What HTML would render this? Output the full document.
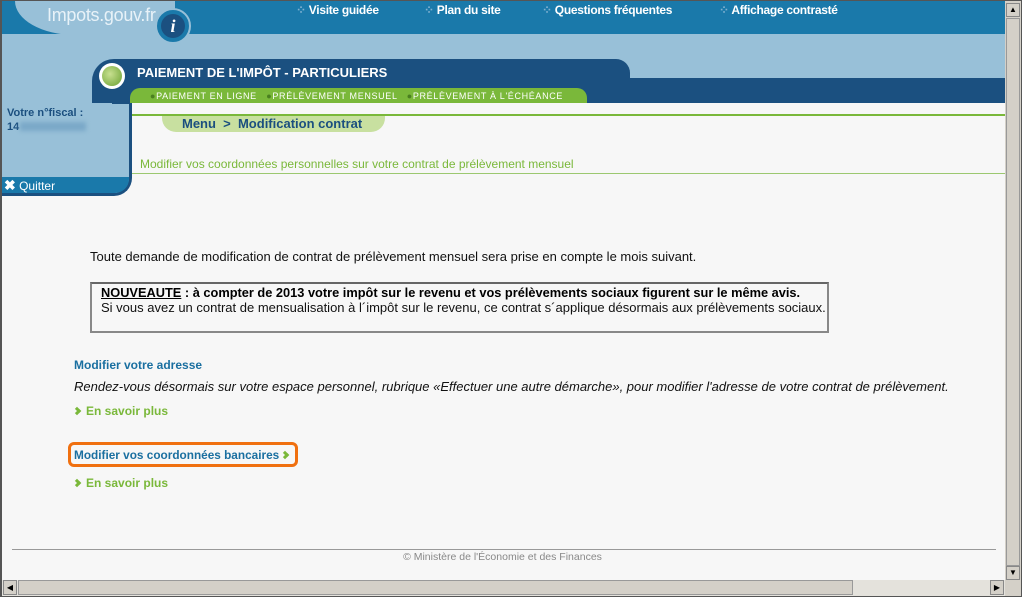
<!DOCTYPE html>
<html><head><meta charset="utf-8"><style>
*{margin:0;padding:0;box-sizing:border-box}
body{width:1022px;height:597px;overflow:hidden;background:#f7f7f7;font-family:"Liberation Sans",sans-serif;position:relative}
.a{position:absolute}
.c{letter-spacing:-0.3px}
.chev{display:inline-block;width:6px;height:6px;border-right:3px solid #7ab83a;border-top:3px solid #7ab83a;transform:rotate(45deg);margin-right:6px;position:relative;top:-1px}
</style></head><body>
<!-- frame -->
<div class="a" style="left:0;top:0;width:1022px;height:597px;border:1px solid #555;border-left:2px solid #555"></div>
<!-- top band -->
<div class="a" style="left:2px;top:1px;width:1003px;height:33px;background:#1a79aa"></div>
<div class="a" style="left:2px;top:34px;width:1003px;height:44px;background:#98c0d8"></div>
<div class="a" style="left:15px;top:1px;width:160px;height:34px;background:#98c0d8;border-radius:0 0 0 60px/0 0 0 34px"></div>
<div class="a" style="left:155px;top:8px;width:36px;height:36px;border-radius:50%;background:#1a79aa;border:2px solid #98c0d8"></div>
<div class="a" style="left:161px;top:14px;width:24px;height:24px;border-radius:50%;background:#1b5080;color:#fff;font:italic bold 18px 'Liberation Serif',serif;text-align:center;line-height:24px">i</div>
<div class="a" style="left:47px;top:5px;color:#e8f2f8;font-size:18px;letter-spacing:-0.3px">Impots.gouv.fr</div>
<div class="a c" style="left:296px;top:3px;color:#fff;font-size:12px;font-weight:bold"><span style="color:#7fb0d0">⁘</span> Visite guidée</div>
<div class="a c" style="left:424px;top:3px;color:#fff;font-size:12px;font-weight:bold"><span style="color:#7fb0d0">⁘</span> Plan du site</div>
<div class="a c" style="left:542px;top:3px;color:#fff;font-size:12px;font-weight:bold"><span style="color:#7fb0d0">⁘</span> Questions fréquentes</div>
<div class="a c" style="left:719px;top:3px;color:#fff;font-size:12px;font-weight:bold"><span style="color:#7fb0d0">⁘</span> Affichage contrasté</div>
<!-- left panel -->
<div class="a" style="left:2px;top:78px;width:130px;height:118px;background:#98c0d8;border-right:3px solid #1b5080;border-bottom:3px solid #1b5080;border-radius:0 0 18px 0"></div>
<div class="a" style="left:2px;top:177px;width:127px;height:16px;background:#1a79aa;border-radius:0 0 14px 0"></div>
<div class="a" style="left:4px;top:177px;color:#fff;font-size:12px"><b style="font-size:14px">✖</b> Quitter</div>
<div class="a" style="left:7px;top:107px;color:#1b4f7f;font-size:11px;font-weight:bold">Votre n°fiscal :</div>
<div class="a" style="left:7px;top:121px;color:#1b4f7f;font-size:11px;font-weight:bold">14</div>
<div class="a" style="left:20px;top:122px;width:66px;height:9px;background:#7aa8c8;filter:blur(2px)"></div>
<!-- header -->
<div class="a" style="left:615px;top:78px;width:390px;height:25px;background:#1b5080"></div>
<div class="a" style="left:92px;top:59px;width:538px;height:44px;background:#1b5080;border-radius:22px 14px 0 0"></div>
<div class="a" style="left:112px;top:90px;width:20px;height:14px;background:#1b5080"></div>
<div class="a" style="left:99px;top:63px;width:26px;height:26px;border-radius:50%;background:#fff"></div>
<div class="a" style="left:102px;top:66px;width:20px;height:20px;border-radius:50%;background:radial-gradient(circle at 40% 40%,#c8e090,#6aa030)"></div>
<div class="a" style="left:137px;top:65px;color:#fff;font-size:13px;font-weight:bold">PAIEMENT DE L'IMPÔT - PARTICULIERS</div>
<div class="a" style="left:130px;top:88px;width:457px;height:15px;background:#7ab83a;border-radius:10px 10px 0 0"></div>
<div class="a" style="left:150px;top:91px;color:#fff;font-size:9px;letter-spacing:0.65px;white-space:nowrap"><span style="color:#4a8020">●</span>PAIEMENT EN LIGNE &nbsp; <span style="color:#4a8020">●</span>PRÉLÈVEMENT MENSUEL &nbsp; <span style="color:#4a8020">●</span>PRÉLÈVEMENT À L'ÉCHÉANCE</div>
<!-- content -->
<div class="a" style="left:132px;top:114px;width:873px;height:2px;background:#7ab83a"></div>
<div class="a" style="left:162px;top:116px;width:223px;height:16px;background:#c8e0a0;border-radius:0 0 14px 14px"></div>
<div class="a" style="left:182px;top:116px;color:#1b4f7f;font-size:13px;font-weight:bold">Menu &nbsp;&gt;&nbsp; Modification contrat</div>
<div class="a" style="left:140px;top:157px;color:#7ab83a;font-size:12px">Modifier vos coordonnées personnelles sur votre contrat de prélèvement mensuel</div>
<div class="a" style="left:132px;top:173px;width:873px;height:1px;background:#9cc870"></div>
<div class="a" style="left:90px;top:249px;color:#111;font-size:13px;white-space:nowrap">Toute demande de modification de contrat de prélèvement mensuel sera prise en compte le mois suivant.</div>
<div class="a" style="left:90px;top:282px;width:739px;height:51px;border:2px solid #888;border-top-color:#666"></div>
<div class="a" style="left:101px;top:285px;color:#000;font-size:12.8px;font-weight:bold;white-space:nowrap"><u>NOUVEAUTE</u> : à compter de 2013 votre impôt sur le revenu et vos prélèvements sociaux figurent sur le même avis.</div>
<div class="a" style="left:101px;top:300px;color:#111;font-size:13px;white-space:nowrap">Si vous avez un contrat de mensualisation à l´impôt sur le revenu, ce contrat s´applique désormais aux prélèvements sociaux.</div>
<div class="a" style="left:74px;top:358px;color:#1a6fa0;font-size:12px;font-weight:bold">Modifier votre adresse</div>
<div class="a" style="left:74px;top:379px;color:#111;font-size:13px;font-style:italic;white-space:nowrap">Rendez-vous désormais sur votre espace personnel, rubrique «Effectuer une autre démarche», pour modifier l'adresse de votre contrat de prélèvement.</div>
<div class="a" style="left:74px;top:404px;color:#7ab83a;font-size:12px;font-weight:bold"><span class="chev"></span>En savoir plus</div>
<div class="a" style="left:68px;top:442px;width:230px;height:25px;border:3px solid #f07010;border-radius:6px"></div>
<div class="a" style="left:74px;top:448px;color:#1a6fa0;font-size:11.8px;font-weight:bold;white-space:nowrap">Modifier vos coordonnées bancaires<span class="chev" style="margin-left:3px"></span></div>
<div class="a" style="left:74px;top:476px;color:#7ab83a;font-size:12px;font-weight:bold"><span class="chev"></span>En savoir plus</div>
<div class="a" style="left:12px;top:549px;width:984px;height:1px;background:#999"></div>
<div class="a" style="left:0;top:551px;width:1005px;text-align:center;color:#888;font-size:10.5px">© Ministère de l'Économie et des Finances</div>
<!-- scrollbars -->
<div class="a" style="left:1005px;top:1px;width:16px;height:579px;background:#d4d0c8"></div>
<div class="a" style="left:1006px;top:3px;width:14px;height:14px;border:1px solid #888;background:#d4d0c8;font-size:8px;text-align:center;line-height:12px">▲</div>
<div class="a" style="left:1006px;top:18px;width:14px;height:548px;border:1px solid #999;background:#d4d0c8"></div>
<div class="a" style="left:1006px;top:566px;width:14px;height:14px;border:1px solid #888;background:#d4d0c8;font-size:8px;text-align:center;line-height:12px">▼</div>
<div class="a" style="left:2px;top:580px;width:1003px;height:16px;background:#e4e2dc"></div>
<div class="a" style="left:3px;top:580px;width:14px;height:15px;border:1px solid #888;background:#d4d0c8;font-size:8px;text-align:center;line-height:13px">◀</div>
<div class="a" style="left:18px;top:580px;width:835px;height:15px;border:1px solid #999;background:#d4d0c8"></div>
<div class="a" style="left:990px;top:580px;width:14px;height:15px;border:1px solid #888;background:#d4d0c8;font-size:8px;text-align:center;line-height:13px">▶</div>
<div class="a" style="left:1005px;top:580px;width:16px;height:16px;background:#d4d0c8"></div>
</body></html>
